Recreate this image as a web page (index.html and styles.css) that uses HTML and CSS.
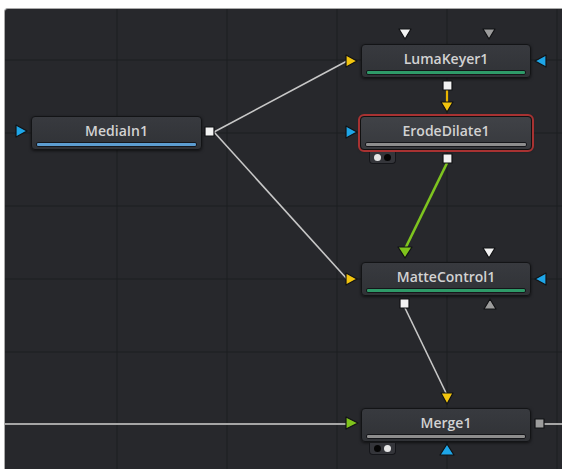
FILE: index.html
```html
<!DOCTYPE html>
<html lang="en">
<head>
  <meta charset="UTF-8" />
  <title>Node Graph</title>
  <link rel="stylesheet" href="styles.css">
</head>
<body>

<!-- Flow panel -->
<div class="panel"></div>

<div class="graph">
  <svg class="wires" width="562" height="469" viewBox="0 0 562 469">
    <!-- grid -->
    <g class="grid">
      <line x1="117" y1="9" x2="117" y2="469" />
      <line x1="227" y1="9" x2="227" y2="469" />
      <line x1="337" y1="9" x2="337" y2="469" />
      <line x1="447" y1="9" x2="447" y2="469" />
      <line x1="557" y1="9" x2="557" y2="469" />
      <line x1="5" y1="60" x2="562" y2="60" />
      <line x1="5" y1="133" x2="562" y2="133" />
      <line x1="5" y1="206" x2="562" y2="206" />
      <line x1="5" y1="279" x2="562" y2="279" />
      <line x1="5" y1="352" x2="562" y2="352" />
    </g>

    <!-- connections -->
    <line class="wire" x1="214" y1="132" x2="347" y2="61" />
    <line class="wire" x1="214" y1="132" x2="347" y2="279" />
    <line class="wire" x1="405" y1="308" x2="447" y2="395" />
    <line class="wire wire-main" x1="5" y1="424" x2="348" y2="424" />
    <line class="wire wire-main" x1="544" y1="424" x2="562" y2="424" />
    <line class="wire-yellow" x1="447" y1="90" x2="447" y2="104" />
    <line class="wire-green" x1="447" y1="163" x2="405" y2="249" />

    <!-- ports -->
    <polygon class="port blue" points="16,125 27,131 16,137" />
    <rect class="port white" x="205" y="127" width="9" height="9" />

    <polygon class="port white" points="399,29 411,29 405,39" />
    <polygon class="port grey" points="483,29 495,29 489,39" />
    <polygon class="port yellow" points="346,55 357,61 346,67" />
    <polygon class="port blue" points="546,55 535,61 546,67" />
    <rect class="port white" x="443" y="81" width="9" height="9" />
    <polygon class="port yellow" points="441,102 453,102 447,112" />

    <polygon class="port blue" points="346,126 357,132 346,138" />
    <rect class="port white" x="443" y="154" width="9" height="9" />

    <polygon class="port green" points="398,247 412,247 405,258" />
    <polygon class="port white" points="483,248 495,248 489,258" />
    <polygon class="port yellow" points="346,273 357,279 346,285" />
    <polygon class="port blue" points="546,273 535,279 546,285" />
    <rect class="port white" x="400" y="299" width="9" height="9" />
    <polygon class="port grey" points="490,299 496,309 484,309" />

    <polygon class="port yellow" points="441,393 453,393 447,404" />
    <polygon class="port green" points="346,417 358,423 346,429" />
    <rect class="port grey" x="535" y="419" width="9" height="9" />
    <polygon class="port blue" points="447,444 454,455 440,455" />
  </svg>

  <div class="node node-media">
    <div class="node-title">MediaIn1</div>
    <div class="node-bar bar-blue"></div>
  </div>

  <div class="node node-luma">
    <div class="node-title">LumaKeyer1</div>
    <div class="node-bar bar-green"></div>
  </div>

  <div class="node node-erode selected">
    <div class="node-title">ErodeDilate1</div>
    <div class="node-bar bar-grey"></div>
  </div>
  <div class="tab tab-erode"><span class="dot on"></span><span class="dot"></span></div>

  <div class="node node-matte">
    <div class="node-title">MatteControl1</div>
    <div class="node-bar bar-green"></div>
  </div>

  <div class="node node-merge">
    <div class="node-title">Merge1</div>
    <div class="node-bar bar-grey"></div>
  </div>
  <div class="tab tab-merge"><span class="dot"></span><span class="dot on"></span></div>
</div>

</body>
</html>
```

FILE: styles.css
```css
body {
  margin: 0;
  background: #ffffff;
  font-family: "Open Sans", "Liberation Sans", sans-serif;
  position: relative;
  width: 562px;
  height: 469px;
  overflow: hidden;
}
.panel {
  margin: 8px 0 0 4px;
  height: 461px;
  background: #27282c;
  border-top: 1px solid #a9a9a9;
  border-left: 1px solid #a9a9a9;
  border-top-left-radius: 4px;
}
.graph {
  position: absolute;
  left: 0;
  top: 0;
  width: 562px;
  height: 469px;
}
.wires {
  position: absolute;
  left: 0;
  top: 0;
}
.grid line {
  stroke: #1d1e21;
  stroke-width: 1;
}
.wire {
  stroke: #c8c8c8;
  stroke-width: 1.6;
}
.wire-main {
  stroke: #a6a6a6;
  stroke-width: 2;
}
.wire-yellow {
  stroke: #e8b400;
  stroke-width: 2.2;
}
.wire-green {
  stroke: #7ec41f;
  stroke-width: 2.6;
}
.port {
  stroke: #111214;
  stroke-width: 1.2;
  stroke-linejoin: round;
}
.port.blue { fill: #1ea6e8; }
.port.white { fill: #f2f2f2; }
.port.grey { fill: #9c9c9c; }
.port.yellow { fill: #f1c40f; }
.port.green { fill: #7fc31c; }

.node {
  position: absolute;
  height: 34px;
  box-sizing: border-box;
  background: linear-gradient(#383a3f, #303236);
  border: 1px solid #131416;
  border-radius: 4px;
  box-shadow: 0 1px 3px rgba(0,0,0,0.6);
}
.node-title {
  height: 25px;
  line-height: 27px;
  text-align: center;
  color: #d2d2d2;
  font-size: 14px;
  font-weight: 600;
}
.node-bar {
  margin: 0 4px;
  height: 3px;
  border-radius: 2px;
  border: 1px solid #15161a;
}
.bar-blue { background: #5c9ccf; }
.bar-green { background: #2e9a68; }
.bar-grey { background: #8d8d8d; }

.node-media { left: 31px; top: 116px; width: 171px; }
.node-luma { left: 361px; top: 44px; width: 170px; }
.node-erode { left: 360px; top: 116px; width: 172px; }
.node-matte { left: 361px; top: 262px; width: 170px; }
.node-merge { left: 361px; top: 408px; width: 170px; }

.node.selected {
  background: linear-gradient(#404247, #37393d);
  outline: 2px solid #a83232;
  border-color: #111;
}

.tab {
  position: absolute;
  width: 25px;
  height: 11px;
  background: #34353a;
  border: 1px solid #15161a;
  border-top: none;
  border-radius: 0 0 4px 4px;
  display: flex;
  align-items: center;
  justify-content: center;
  gap: 3px;
}
.dot {
  flex: none;
  width: 7px;
  height: 7px;
  border-radius: 50%;
  background: #050505;
}
.dot.on { background: #e6e6e6; }
.tab-erode { left: 369px; top: 152px; }
.tab-merge { left: 369px; top: 443px; }
```
